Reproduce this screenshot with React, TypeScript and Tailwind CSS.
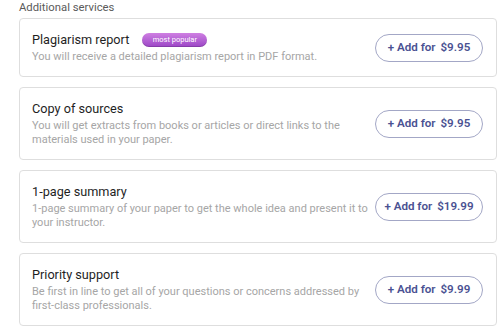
type Service = {
  title: string;
  description: string;
  price: string;
  popular?: boolean;
};

const services: Service[] = [
  {
    title: "Plagiarism report",
    description: "You will receive a detailed plagiarism report in PDF format.",
    price: "$9.95",
    popular: true,
  },
  {
    title: "Copy of sources",
    description:
      "You will get extracts from books or articles or direct links to the materials used in your paper.",
    price: "$9.95",
  },
  {
    title: "1-page summary",
    description:
      "1-page summary of your paper to get the whole idea and present it to your instructor.",
    price: "$19.99",
  },
  {
    title: "Priority support",
    description:
      "Be first in line to get all of your questions or concerns addressed by first-class professionals.",
    price: "$9.99",
  },
];

function ServiceCard({ service }: { service: Service }) {
  return (
    <div className="flex items-center rounded-[4px] border border-[#dedede] bg-white pb-[12px] pl-[12px] pr-[13px] pt-[12px]">
      <div className="min-w-0 flex-1">
        <div className="flex items-center">
          <h3 className="text-[12.7px] leading-[17px] text-[#1f1f1f]">{service.title}</h3>
          {service.popular ? (
            <span className="ml-[13px] flex h-[14px] w-[65px] items-center justify-center rounded-full bg-gradient-to-b from-[#cf7fe2] to-[#9c45c6] text-[7.5px] leading-none text-white shadow-[inset_0_-1px_0_rgba(0,0,0,0.15)]">
              most popular
            </span>
          ) : null}
        </div>
        <p className="mt-[2px] text-[11px] leading-[14px] text-[#a6a6a6]">{service.description}</p>
      </div>
      <button className="flex h-[28px] w-[108px] shrink-0 items-center justify-center rounded-full border border-[#a3a7c6] bg-white text-[11.6px] font-semibold text-[#4a5192]">
        + Add for<span className="ml-[5px]">{service.price}</span>
      </button>
    </div>
  );
}

export default function App() {
  return (
    <div
      className="min-h-[331px] w-[500px] bg-white pl-[19px] pr-[3px]"
      style={{ fontFamily: "Roboto, 'Liberation Sans', sans-serif" }}
    >
      <div className="mb-[2px] text-[11.3px] leading-[16px] text-[#5a5a5a]">Additional services</div>
      <div className="flex flex-col gap-[10px]">
        {services.map((s) => (
          <ServiceCard key={s.title} service={s} />
        ))}
      </div>
    </div>
  );
}
